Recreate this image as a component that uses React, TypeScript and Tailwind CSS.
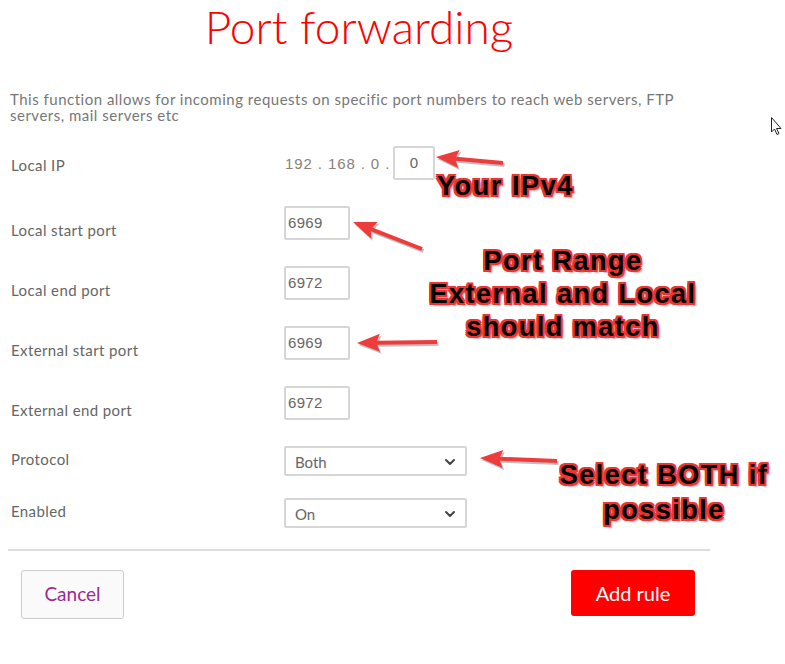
import { ChevronDown } from "lucide-react";

const ui = { fontFamily: "Lato, 'Open Sans', sans-serif" };
const arial = { fontFamily: "'Liberation Sans', Arial, sans-serif" };

const arrows = [
  { from: [503, 163], to: [436, 157] },
  { from: [422, 249], to: [353, 222] },
  { from: [437, 342], to: [357, 343] },
  { from: [557, 461], to: [480, 458] },
];

function arrowPoints(from: number[], to: number[]) {
  const [x1, y1] = from;
  const [x2, y2] = to;
  const len = Math.hypot(x2 - x1, y2 - y1);
  const ux = (x2 - x1) / len;
  const uy = (y2 - y1) / len;
  const px = -uy;
  const py = ux;
  const head = 20;
  const hw = 9;
  const sw = 2;
  const bx = x2 - ux * head;
  const by = y2 - uy * head;
  const pts = [
    [x1 + px * sw, y1 + py * sw],
    [bx + px * sw, by + py * sw],
    [bx + px * hw - ux * 3, by + py * hw - uy * 3],
    [x2, y2],
    [bx - px * hw - ux * 3, by - py * hw - uy * 3],
    [bx - px * sw, by - py * sw],
    [x1 - px * sw, y1 - py * sw],
  ];
  return pts.map((p) => p.join(",")).join(" ");
}

// red-outlined black caption text
const caption = {
  ...arial,
  textShadow:
    "2px 0 #e33,-2px 0 #e33,0 2px #e33,0 -2px #e33,2px 2px #e33,-2px -2px #e33,2px -2px #e33,-2px 2px #e33,3px 3px 2px rgba(0,0,0,.35)",
};

function PortRow({ label, value }: { label: string; value: string }) {
  return (
    <div className="flex items-end">
      <div className="w-[276px] pl-[3px] text-[15px] leading-5 tracking-[0.4px] text-[#666]">{label}</div>
      <div
        className="w-[66px] h-[34px] border-2 border-[#d6d6d6] rounded-[2px] flex items-center pl-[2px] text-[15px] tracking-[0.3px] text-[#666]"
        style={arial}
      >
        {value}
      </div>
    </div>
  );
}

function SelectRow({ label, value }: { label: string; value: string }) {
  return (
    <div className="flex items-center">
      <div className="w-[276px] pl-[3px] text-[15px] leading-5 tracking-[0.4px] text-[#666] -mt-1">{label}</div>
      <div className="w-[183px] h-[30px] border-2 border-[#d6d6d6] rounded-[2px] flex items-center justify-between pl-[9px] pr-[7px] text-[15px] text-[#666] pt-[2px]">
        <span>{value}</span>
        <ChevronDown size={16} strokeWidth={3} className="text-[#444]" />
      </div>
    </div>
  );
}

export default function App() {
  return (
    <div className="relative w-[785px] h-[664px] bg-white overflow-hidden" style={ui}>
      <div className="w-[702px] ml-[8px]">
        <h1 className="text-center text-[46px] font-light leading-[52px] text-[#ff0000] pt-[1px]">
          Port forwarding
        </h1>

        <p className="mt-[38px] pl-[2px] text-[15px] leading-4 tracking-[0.5px] text-[#777]">
          This function allows for incoming requests on specific port numbers to reach web servers, FTP servers, mail
          servers etc
        </p>

        <div className="mt-[23px] flex flex-col">
          <div className="flex items-center">
            <div className="w-[276px] pl-[3px] text-[15px] leading-5 tracking-[0.4px] text-[#666] mt-[3px]">
              Local IP
            </div>
            <div className="w-[109px] pl-[1px] text-[15px] text-[#8a8178] tracking-[0.9px] mt-[2px]" style={arial}>
              192 . 168 . 0 .
            </div>
            <div
              className="w-[42px] h-[34px] border-2 border-[#d6d6d6] rounded-[2px] flex items-center justify-center text-[15px] text-[#666]"
              style={arial}
            >
              0
            </div>
          </div>

          <div className="mt-[26px] flex flex-col gap-[26px]">
            <PortRow label="Local start port" value="6969" />
            <PortRow label="Local end port" value="6972" />
            <PortRow label="External start port" value="6969" />
            <PortRow label="External end port" value="6972" />
          </div>

          <div className="mt-[26px] flex flex-col gap-[22px]">
            <SelectRow label="Protocol" value="Both" />
            <SelectRow label="Enabled" value="On" />
          </div>
        </div>

        <div className="mt-[21px] h-[2px] bg-[#dddddd]" />

        <div className="mt-[19px] flex items-start justify-between pl-[13px] pr-[15px]">
          <button className="w-[103px] h-[49px] border border-[#cccccc] rounded-[3px] bg-[#fafafa] text-[19px] text-[#9c2a8c]">
            Cancel
          </button>
          <button className="w-[124px] h-[46px] rounded-[3px] bg-[#ff0000] text-[20px] text-white">Add rule</button>
        </div>
      </div>

      {/* annotations */}
      <svg className="absolute inset-0 pointer-events-none" width="785" height="664">
        {arrows.map((a, i) => (
          <g key={i}>
            <polygon points={arrowPoints(a.from, a.to)} fill="rgba(0,0,0,0.25)" transform="translate(1.5,2)" />
            <polygon points={arrowPoints(a.from, a.to)} fill="#ee3b3b" />
          </g>
        ))}
        {/* mouse cursor */}
        <path
          d="M771.5 117.5 L771.5 132 L774.5 129 L777 134.5 L779 133.5 L776.5 128.5 L781 128.5 Z"
          fill="white"
          stroke="#222"
          strokeWidth="1"
          strokeLinejoin="round"
        />
      </svg>

      <div
        className="absolute left-[437px] top-[170px] text-[27px] font-bold leading-8 tracking-[1.6px] text-black"
        style={caption}
      >
        Your IPv4
      </div>
      <div
        className="absolute left-[413px] top-[245px] w-[300px] text-center text-[27px] font-bold leading-[33px] tracking-[1.5px] text-black"
        style={caption}
      >
        Port Range
        <br />
        External and Local
        <br />
        should match
      </div>
      <div
        className="absolute left-[548px] top-[458px] w-[232px] text-center text-[27px] font-bold leading-[35px] tracking-[1.5px] text-black"
        style={caption}
      >
        Select BOTH if
        <br />
        possible
      </div>
    </div>
  );
}
